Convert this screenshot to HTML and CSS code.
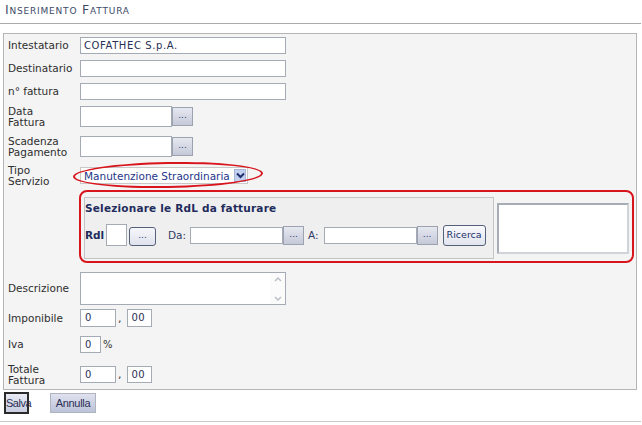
FILE: index.html
```html
<!DOCTYPE html>
<html>
<head>
<meta charset="utf-8">
<link rel="stylesheet" href="styles.css">
</head>
<body>
<div class="title">Inserimento Fattura</div>
<div class="rule"></div>
<div class="panel">
  <div class="row mt3">
    <div class="lbl">Intestatario</div>
    <div class="txt w206 val">COFATHEC S.p.A.</div>
  </div>
  <div class="row mt6">
    <div class="lbl">Destinatario</div>
    <div class="txt w206"></div>
  </div>
  <div class="row mt6">
    <div class="lbl">n° fattura</div>
    <div class="txt w206"></div>
  </div>
  <div class="row rh21 mt6">
    <div class="lbl">Data<br>Fattura</div>
    <div class="txt w92 h21"></div><div class="dots h21">...</div>
  </div>
  <div class="row rh21 mt9">
    <div class="lbl">Scadenza<br>Pagamento</div>
    <div class="txt w92 h21"></div><div class="dots h21">...</div>
  </div>
  <div class="row mt10 tipo">
    <div class="lbl">Tipo<br>Servizio</div>
    <div class="select">
      <span class="seltext">Manutenzione Straordinaria</span>
      <span class="selbtn"><svg width="9" height="7" viewBox="0 0 9 7"><polyline points="1,1.5 4.5,5 8,1.5" fill="none" stroke="#1f2f6f" stroke-width="2"/></svg></span>
    </div>
    <div class="ellipse"></div>
  </div>
  <div class="row rh73 mt6 top">
    <div class="lbl"></div>
    <div class="redbox">
      <div class="fieldset">
        <div class="fs-title">Selezionare le RdL da fatturare</div>
        <div class="fs-row">
          <span class="b">Rdl</span>
          <div class="txt sq"></div>
          <div class="btn-r">...</div>
          <span class="fl da">Da:</span>
          <div class="txt w93"></div><div class="dots">...</div>
          <span class="fl a">A:</span>
          <div class="txt w93"></div><div class="dots">...</div>
          <div class="btn-ric">Ricerca</div>
        </div>
      </div>
      <div class="listbox"></div>
    </div>
  </div>
  <div class="row rh33 mt9">
    <div class="lbl">Descrizione</div>
    <div class="textarea">
      <div class="sb">
        <svg width="10" height="7" viewBox="0 0 10 7"><polyline points="2,5 5,2 8,5" fill="none" stroke="#b8bcc4" stroke-width="1.4"/></svg>
        <svg width="10" height="7" viewBox="0 0 10 7"><polyline points="2,2 5,5 8,2" fill="none" stroke="#b8bcc4" stroke-width="1.4"/></svg>
      </div>
    </div>
  </div>
  <div class="row rh18 mt4">
    <div class="lbl">Imponibile</div>
    <div class="txt w36 h18 num">0</div><span class="sep">,</span><div class="txt w25 h18 num">00</div>
  </div>
  <div class="row mt9">
    <div class="lbl">Iva</div>
    <div class="txt w21 num">0</div><span class="pct">%</span>
  </div>
  <div class="row mt13">
    <div class="lbl">Totale<br>Fattura</div>
    <div class="txt w36 num">0</div><span class="sep">,</span><div class="txt w25 num">00</div>
  </div>
</div>
<div class="actions">
  <div class="abtn salva">Salva</div>
  <div class="abtn annulla">Annulla</div>
</div>
<div class="rule bottom"></div>
</body>
</html>
```

FILE: styles.css
```css
* { box-sizing: border-box; }
body {
  margin: 0;
  background: #fff;
  font-family: "DejaVu Sans", Verdana, sans-serif;
  font-size: 11px;
  color: #2a2a2a;
}
.title {
  height: 23px;
  padding: 2px 0 0 5px;
  font-size: 12.5px;
  font-variant: small-caps;
  letter-spacing: 0.8px;
  color: #3c4a68;
}
.rule {
  height: 1px;
  background: #a9a9a9;
  width: 641px;
}
.rule.bottom {
  background: #c8c8c8;
  margin-top: 7px;
}
.panel {
  position: relative;
  margin: 9px 0 0 3px;
  width: 634px;
  height: 357px;
  border: 1px solid #b5b5b5;
  background: #f4f4f4;
  padding: 0 0 0 4px;
  display: flex;
  flex-direction: column;
}
.row {
  display: flex;
  align-items: center;
  position: relative;
  height: 17px;
  flex: none;
}
.rh21 { height: 21px; }
.rh18 { height: 18px; }
.rh33 { height: 33px; }
.rh73 { height: 73px; }
.row.top { align-items: flex-start; }
.mt3 { margin-top: 3px; }
.mt4 { margin-top: 4px; }
.mt6 { margin-top: 6px; }
.mt9 { margin-top: 9px; }
.mt10 { margin-top: 10px; }
.mt13 { margin-top: 13px; }
.lbl {
  width: 72px;
  flex: none;
  line-height: 11px;
  color: #2e2e2e;
  font-size: 10.5px;
}
.txt {
  height: 17px;
  border: 1px solid #a4abb5;
  background: #fff;
  font-size: 9.5px;
  color: #2a2f55;
  padding: 2px 0 0 4px;
  letter-spacing: 0.3px;
  flex: none;
}
.val { font-size: 10px; letter-spacing: 0.6px; padding-left: 3px; }
.w206 { width: 206px; }
.w92 { width: 92px; }
.w93 { width: 93px; }
.w36 { width: 36px; }
.w25 { width: 25px; }
.w21 { width: 21px; }
.h21 { height: 21px; }
.h18 { height: 18px; }
.num { font-size: 10px; padding-top: 2px; }
.dots {
  width: 21px;
  height: 19px;
  border: 1px solid #9ca2b0;
  background: linear-gradient(#e6e8f0, #c5c9d8);
  color: #30407a;
  font-size: 9px;
  text-align: center;
  line-height: 15px;
  flex: none;
}
.select {
  display: flex;
  align-items: center;
  width: 168px;
  height: 17px;
  border: 1px solid #c8c8c8;
  background: #fff;
}
.seltext {
  flex: 1;
  color: #25358a;
  font-size: 10.5px;
  padding-left: 3px;
  white-space: nowrap;
}
.selbtn {
  width: 12px;
  height: 13px;
  margin-right: 1px;
  background: #c3d0ee;
  border: 1px solid #a8b6da;
  display: flex;
  align-items: center;
  justify-content: center;
}
.ellipse {
  position: absolute;
  left: 65px;
  top: -5px;
  width: 190px;
  height: 26px;
  border: 2px solid #d8141c;
  border-radius: 50%;
  transform: rotate(-1deg);
  pointer-events: none;
}
.redbox {
  display: flex;
  align-items: flex-start;
  width: 555px;
  height: 73px;
  margin-left: -1px;
  border: 2px solid #d8141c;
  border-radius: 8px;
  padding: 5px 0 0 3px;
}
.fieldset {
  width: 410px;
  height: 62px;
  border: 1px solid #c4c4c4;
  background: #efefef;
  padding: 4px 0 0 0;
}
.fs-title {
  font-weight: bold;
  color: #1f2c5c;
  font-size: 10.5px;
  letter-spacing: 0.2px;
}
.fs-row {
  display: flex;
  align-items: center;
  margin-top: 10px;
}
.b {
  font-weight: bold;
  color: #1f2c5c;
  font-size: 10.5px;
  width: 21px;
}
.sq { width: 21px; height: 22px; }
.btn-r {
  width: 27px;
  height: 19px;
  margin: 2px 0 0 2px;
  border: 1px solid #55607a;
  border-radius: 3px;
  background: linear-gradient(#f6f7fb, #dfe2ec);
  color: #30407a;
  font-size: 9px;
  text-align: center;
  line-height: 15px;
}
.fl {
  color: #2f3a66;
  font-size: 10.5px;
}
.da { margin: 0 4px 0 12px; }
.a { margin: 0 5px 0 4px; }
.btn-ric {
  margin-left: 5px;
  width: 43px;
  height: 21px;
  border: 1px solid #55607a;
  border-radius: 3px;
  background: linear-gradient(#f8f9fc, #e2e5ee);
  color: #22306a;
  font-size: 9.5px;
  text-align: center;
  line-height: 18px;
}
.listbox {
  margin: 6px 0 0 3px;
  width: 132px;
  height: 51px;
  border: 2px solid #a6adb5;
  border-right-color: #d0d4d8;
  border-bottom-color: #d0d4d8;
  background: #fff;
}
.textarea {
  width: 206px;
  height: 33px;
  border: 1px solid #a4abb5;
  background: #fff;
  display: flex;
  justify-content: flex-end;
}
.sb {
  width: 15px;
  display: flex;
  flex-direction: column;
  justify-content: space-between;
  align-items: center;
  padding: 3px 0 2px;
  background: #fbfbfb;
}
.sep { margin: 0 5px 0 2px; color: #333; }
.pct { margin-left: 2px; font-size: 10px; color: #333; }
.actions {
  display: flex;
  align-items: center;
  margin-top: 2px;
  height: 22px;
}
.abtn {
  font-family: "Liberation Sans", Arial, sans-serif;
  font-size: 11px;
  color: #2a2f55;
  text-align: center;
}
.salva {
  margin-left: 4px;
  width: 25px;
  height: 22px;
  border: 2px solid #2a2a2a;
  background: linear-gradient(#e8ebf4, #c8cde0);
  line-height: 18px;
  letter-spacing: -0.5px;
}
.annulla {
  margin-left: 21px;
  width: 46px;
  height: 20px;
  border: 1px solid #b0b4c0;
  background: linear-gradient(#dfe2ee, #bcc2d8);
  line-height: 18px;
  letter-spacing: -0.3px;
}
```
